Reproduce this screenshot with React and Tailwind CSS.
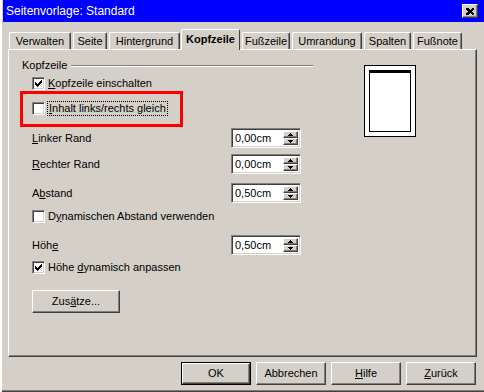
import React from 'react';

const raised = "border-t border-l border-t-white border-l-white border-r border-b border-r-[#404040] border-b-[#404040] shadow-[inset_-1px_-1px_0_#808080]";
const sunken = "border-t border-l border-t-[#808080] border-l-[#808080] border-r border-b border-r-white border-b-white shadow-[inset_1px_1px_0_#404040,inset_-1px_-1px_0_#d4d0c8]";

const CheckMark = () => (
  <svg width="7" height="7" viewBox="0 0 7 7" shapeRendering="crispEdges">
    <path d="M0 2h1v3h-1zM1 3h1v3h-1zM2 4h1v3h-1zM3 3h1v3h-1zM4 2h1v3h-1zM5 1h1v3h-1zM6 0h1v3h-1z" fill="#000" />
  </svg>
);

const CheckBox = ({ checked }) => (
  <div className={`flex h-[13px] w-[13px] shrink-0 items-center justify-center bg-white ${sunken}`}>
    {checked && <CheckMark />}
  </div>
);

const Arrow = ({ up }) => (
  <svg width="5" height="3" viewBox="0 0 5 3" shapeRendering="crispEdges">
    {up ? <path d="M2 0h1v1h1v1h1v1h-5v-1h1v-1h1z" fill="#000" /> : <path d="M0 0h5v1h-1v1h-1v1h-1v-1h-1v-1h-1z" fill="#000" />}
  </svg>
);

const Spin = ({ value }) => (
  <div className={`flex h-[20px] w-[70px] shrink-0 bg-white p-[2px] ${sunken}`}>
    <div className="flex flex-1 items-center pl-[1px]">{value}</div>
    <div className="flex w-[15px] flex-col">
      <div className={`flex h-[8px] items-center justify-center bg-[#d4d0c8] ${raised}`}>
        <Arrow up />
      </div>
      <div className={`flex h-[8px] items-center justify-center bg-[#d4d0c8] ${raised}`}>
        <Arrow />
      </div>
    </div>
  </div>
);

const Field = ({ label, value, className }) => (
  <div className={`flex items-center ${className}`}>
    <div className="w-[199px]">{label}</div>
    <Spin value={value} />
  </div>
);

const Button = ({ children, isDefault, className = '' }) =>
  isDefault ? (
    <div className={`h-[23px] border border-black ${className}`}>
      <div className={`flex h-full items-center justify-center ${raised}`}>{children}</div>
    </div>
  ) : (
    <div className={`flex h-[23px] items-center justify-center ${raised} ${className}`}>{children}</div>
  );

const tabs = [
  { label: 'Verwalten', w: 'w-[62px]', ml: 'ml-[1px]' },
  { label: 'Seite', w: 'w-[34px]', ml: 'ml-[2px]' },
  { label: 'Hintergrund', w: 'w-[71px]', ml: 'ml-[2px]' },
  { label: 'Kopfzeile', w: 'w-[59px]', ml: 'ml-[1px]', active: true },
  { label: 'Fußzeile', w: 'w-[48px]', ml: 'ml-[2px]' },
  { label: 'Umrandung', w: 'w-[70px]', ml: 'ml-[2px]' },
  { label: 'Spalten', w: 'w-[47px]', ml: 'ml-[2px]' },
  { label: 'Fußnote', w: 'w-[49px]', ml: 'ml-[2px]' },
];

export default function App() {
  return (
    <div className="relative flex h-[392px] w-[484px] flex-col overflow-hidden bg-[#d4d0c8] font-['Liberation_Sans',Arial,sans-serif] text-[11px] leading-[13px] text-black shadow-[inset_2px_0_0_#fff,inset_1px_0_0_#d4d0c8,inset_0_-1px_0_#404040,inset_0_-2px_0_#808080]">
      {/* title bar */}
      <div className="ml-[3px] flex h-[22px] items-center justify-between bg-[#0000ff] pl-[3px] pr-[6px]">
        <span className="text-[12px] text-white">Seitenvorlage: Standard</span>
        <div className={`flex h-[14px] w-[16px] items-center justify-center bg-[#d4d0c8] ${raised}`}>
          <svg width="8" height="7" viewBox="0 0 8 7" shapeRendering="crispEdges">
            <path d="M0 0h2l2 2l2-2h2v1l-2 2.5l2 2.5v1h-2l-2-2l-2 2h-2v-1l2-2.5l-2-2.5z" fill="#000" />
          </svg>
        </div>
      </div>

      <div className="flex flex-col pl-[8px] pr-[7px] pt-[7px]">
        {/* tabs */}
        <div className="flex h-[20px] items-end">
          {tabs.map((t) =>
            t.active ? (
              <div
                key={t.label}
                className={`relative z-10 -mb-px flex h-[21px] ${t.w} ${t.ml} items-center justify-center rounded-t-[2px] border-l border-t border-r border-l-white border-t-white border-r-[#404040] bg-[#d4d0c8] pb-[2px] font-bold`}
              >
                {t.label}
              </div>
            ) : (
              <div
                key={t.label}
                className={`flex h-[17px] ${t.w} ${t.ml} items-center justify-center rounded-t-[2px] border-l border-t border-r border-l-white border-t-white border-r-[#404040] shadow-[inset_-1px_0_0_#808080]`}
              >
                {t.label}
              </div>
            )
          )}
        </div>

        {/* panel */}
        <div className="flex h-[308px] border-l border-t border-l-white border-t-white border-r border-b border-r-[#404040] border-b-[#404040] pl-[13px] pt-[9px] shadow-[inset_-1px_-1px_0_#808080]">
          <div className="flex w-[291px] flex-col">
            <div className="flex h-[13px] items-center">
              <span>Kopfzeile</span>
              <div className="ml-[4px] h-[2px] flex-1 border-t border-b border-t-[#808080] border-b-white" />
            </div>
            <div className="flex flex-col pl-[10px]">
              <div className="mt-[5px] flex items-center gap-[3px]">
                <CheckBox checked />
                <span><u>K</u>opfzeile einschalten</span>
              </div>
              <div className="mt-[11px] flex items-center gap-[2px]">
                <CheckBox />
                <span className="border border-dotted border-black px-px"><u>I</u>nhalt links/rechts gleich</span>
              </div>
              <Field className="mt-[12px]" label={<><u>L</u>inker Rand</>} value="0,00cm" />
              <Field className="mt-[6px]" label={<><u>R</u>echter Rand</>} value="0,00cm" />
              <Field className="mt-[9px]" label={<>A<u>b</u>stand</>} value="0,50cm" />
              <div className="mt-[7px] flex items-center gap-[3px]">
                <CheckBox />
                <span>D<u>y</u>namischen Abstand verwenden</span>
              </div>
              <Field className="mt-[12px]" label={<>Höh<u>e</u></>} value="0,50cm" />
              <div className="mt-[6px] flex items-center gap-[3px]">
                <CheckBox checked />
                <span>Höhe <u>d</u>ynamisch anpassen</span>
              </div>
              <Button className="mt-[16px] w-[88px]">Zus<u>ä</u>tze...</Button>
            </div>
          </div>

          {/* page preview */}
          <div className="ml-[51px] mt-[6px] h-[72px] w-[52px] border border-black bg-white p-[4px]">
            <div className="h-full w-full border border-black border-t-[3px] bg-white" />
          </div>
        </div>

        {/* buttons */}
        <div className="mt-[5px] flex justify-end gap-[5px] pr-[1px]">
          <Button isDefault className="w-[70px]">OK</Button>
          <Button className="w-[70px]">Abbrechen</Button>
          <Button className="w-[70px]"><u>H</u>ilfe</Button>
          <Button className="w-[70px]"><u>Z</u>urück</Button>
        </div>
      </div>

      {/* red annotation */}
      <div className="absolute left-[20px] top-[91px] h-[36px] w-[163px] border-[3px] border-[#ff0000]" />
    </div>
  );
}
